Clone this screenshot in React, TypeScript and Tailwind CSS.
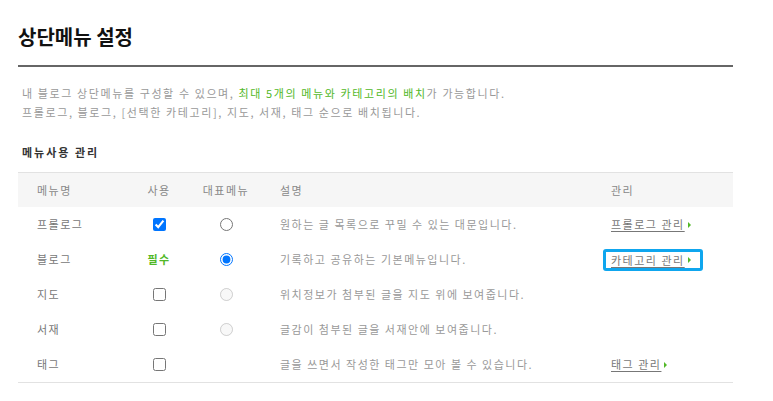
import React from "react";

const rows = [
  { name: "프롤로그", use: "checked", rep: "empty", desc: "원하는 글 목록으로 꾸밀 수 있는 대문입니다.", link: "프롤로그 관리", focus: false },
  { name: "블로그", use: "required", rep: "checked", desc: "기록하고 공유하는 기본메뉴입니다.", link: "카테고리 관리", focus: true },
  { name: "지도", use: "unchecked", rep: "disabled", desc: "위치정보가 첨부된 글을 지도 위에 보여줍니다.", link: "", focus: false },
  { name: "서재", use: "unchecked", rep: "disabled", desc: "글감이 첨부된 글을 서재안에 보여줍니다.", link: "", focus: false },
  { name: "태그", use: "unchecked", rep: "none", desc: "글을 쓰면서 작성한 태그만 모아 볼 수 있습니다.", link: "태그 관리", focus: false },
];

function Arrow() {
  return <span className="ml-[3px] inline-block h-0 w-0 border-y-[3px] border-y-transparent border-l-[3px] border-l-[#52b828]" />;
}

export default function App() {
  return (
    <div
      className="min-h-[401px] w-[773px] bg-white pl-[18px] pt-[22px]"
      style={{ fontFamily: '"Noto Sans CJK KR", "Noto Sans", sans-serif' }}
    >
      <div className="w-[715px]">
        <h1 className="text-[20px] font-bold leading-[30px] tracking-[0px] text-[#111]">상단메뉴 설정</h1>
        <div className="mt-[13px] h-[2px] bg-[#666]" />
        <div className="mt-[17px] pl-[4px] text-[11px] leading-[19px] tracking-[1.6px] text-[#999]">
          <p>
            내 블로그 상단메뉴를 구성할 수 있으며, <span className="text-[#52b828]">최대 5개의 메뉴와 카테고리의 배치</span>가 가능합니다.
          </p>
          <p>프롤로그, 블로그, [선택한 카테고리], 지도, 서재, 태그 순으로 배치됩니다.</p>
        </div>
        <h2 className="mt-[21px] pl-[4px] text-[11px] font-bold leading-[18px] tracking-[2px] text-[#333]">메뉴사용 관리</h2>
        <div className="mt-[11px] border-y border-[#e2e2e2] text-[11px] tracking-[1.5px]">
          <div className="grid h-[34px] grid-cols-[108px_66px_68px_351px_122px] items-center bg-[#f6f6f6] text-[#888]">
            <div className="pl-[19px]">메뉴명</div>
            <div className="text-center">사용</div>
            <div className="text-center">대표메뉴</div>
            <div className="pl-[20px]">설명</div>
            <div>관리</div>
          </div>
          {rows.map((r) => (
            <div key={r.name} className="grid h-[35px] grid-cols-[108px_66px_68px_351px_122px] items-center">
              <div className="pl-[19px] text-[#777]">{r.name}</div>
              <div className="flex justify-center">
                {r.use === "required" ? (
                  <span className="font-bold text-[#52b828]">필수</span>
                ) : (
                  <input type="checkbox" defaultChecked={r.use === "checked"} className="m-0 h-[13px] w-[13px]" />
                )}
              </div>
              <div className="flex justify-center">
                {r.rep !== "none" && (
                  <input
                    type="radio"
                    name="rep"
                    defaultChecked={r.rep === "checked"}
                    disabled={r.rep === "disabled"}
                    className="m-0 h-[13px] w-[13px]"
                  />
                )}
              </div>
              <div className="pl-[20px] text-[#999]">{r.desc}</div>
              <div>
                {r.link && (
                  <span
                    className={
                      r.focus
                        ? "-ml-[8px] inline-flex items-center rounded-[3px] border-[3px] border-[#0fa6ee] py-[2px] pl-[5px] pr-[9px] leading-[12px] text-[#777]"
                        : "inline-flex items-center text-[#777]"
                    }
                  >
                    <a href="#" className="underline underline-offset-2">{r.link}</a>
                    <Arrow />
                  </span>
                )}
              </div>
            </div>
          ))}
        </div>
      </div>
    </div>
  );
}
